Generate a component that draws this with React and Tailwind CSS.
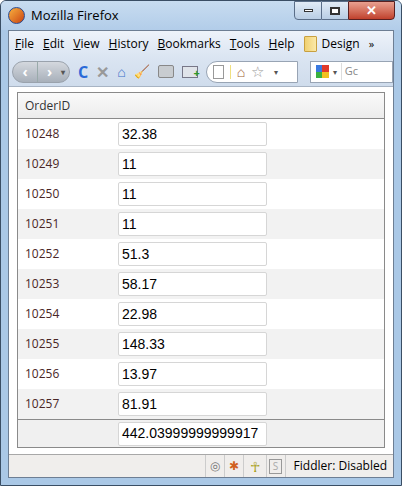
import React from "react";

const rows = [
  ["10248", "32.38"], ["10249", "11"], ["10250", "11"], ["10251", "11"], ["10252", "51.3"],
  ["10253", "58.17"], ["10254", "22.98"], ["10255", "148.33"], ["10256", "13.97"], ["10257", "81.91"],
];

const menu = ["File", "Edit", "View", "History", "Bookmarks", "Tools", "Help"];

function Input({ value }) {
  return (
    <div className="w-[149px] h-[24px] bg-white border border-[#d6d6d6] rounded-[2px] flex items-center pl-[3px] text-[14px] text-black" style={{ fontFamily: "'Liberation Sans', Arial, sans-serif" }}>
      {value}
    </div>
  );
}

export default function App() {
  return (
    <div className="w-[402px] h-[486px] bg-[#aac8e6] rounded-t-[6px] flex flex-col border border-[#3a4e64] overflow-hidden" style={{ fontFamily: "'Segoe UI', 'Open Sans', 'Liberation Sans', sans-serif" }}>
      {/* Title bar */}
      <div className="h-[29px] flex items-center bg-gradient-to-b from-[#c8dcf0] to-[#b2cde9] pl-[7px] relative">
        <div className="w-[17px] h-[17px] rounded-full bg-gradient-to-br from-[#f8b040] to-[#c84010] border border-[#2a4a90]" />
        <span className="ml-[6px] text-[13px] text-black">Mozilla Firefox</span>
        <div className="absolute right-[6px] top-0 flex">
          <div className="w-[28px] h-[19px] border border-[#5a6e88] rounded-bl-[4px] bg-gradient-to-b from-[#e2ecf6] to-[#b8cde4] flex items-center justify-center">
            <div className="w-[9px] h-[3px] bg-white border border-[#333]" />
          </div>
          <div className="w-[26px] h-[19px] border-y border-[#5a6e88] bg-gradient-to-b from-[#e2ecf6] to-[#b8cde4] flex items-center justify-center">
            <div className="w-[10px] h-[8px] border-2 border-[#333] bg-white" />
          </div>
          <div className="w-[47px] h-[19px] border border-[#5a2020] rounded-br-[4px] bg-gradient-to-b from-[#e8a090] to-[#c0402c] flex items-center justify-center text-white font-bold text-[13px]">
            ✕
          </div>
        </div>
      </div>
      {/* Browser body */}
      <div className="flex-1 mx-[7px] mb-[7px] border border-[#6d7e93] bg-[#dfe8f3] flex flex-col">
        <div className="h-[26px] flex items-center pl-[6px] gap-[9px] text-[12px] text-black bg-gradient-to-b from-[#eef3fa] to-[#dbe5f2] overflow-hidden whitespace-nowrap">
          {menu.map((m) => (
            <span key={m}><span className="underline">{m[0]}</span>{m.slice(1)}</span>
          ))}
          <span className="flex items-center gap-[5px]">
            <span className="w-[13px] h-[16px] bg-gradient-to-r from-[#f0d070] to-[#fbe9a8] border border-[#c8a040] rounded-[1px]" />
            Design
          </span>
          <span className="text-[11px]">»</span>
        </div>
        <div className="h-[29px] flex items-center pl-[3px] gap-[8px] bg-gradient-to-b from-[#dbe5f2] to-[#cfdcec]">
          <div className="flex h-[22px] w-[58px] rounded-full bg-gradient-to-b from-[#d4d8de] to-[#a8b0ba] border border-[#9aa2ac] items-center text-white text-[14px] font-bold">
            <span className="w-[24px] text-center">‹</span>
            <span className="w-[24px] text-center border-l border-[#9aa]">›</span>
            <span className="text-[8px] text-[#555]">▾</span>
          </div>
          <span className="text-[#2a6ad8] font-bold text-[16px]">C</span>
          <span className="text-[#999] font-bold text-[16px]">✕</span>
          <span className="text-[#3a70c8] text-[14px]">⌂</span>
          <span className="text-[#c89020] text-[13px]">🧹</span>
          <div className="w-[16px] h-[13px] bg-[#c8ccd0] border border-[#888] rounded-[2px]" />
          <div className="w-[16px] h-[12px] bg-[#e0e4ea] border border-[#778] relative">
            <span className="absolute -right-[3px] -bottom-[5px] text-[#2a9a2a] font-bold text-[11px]">+</span>
          </div>
          <div className="flex items-center h-[22px] w-[92px] bg-white border border-[#98a4b4] rounded-l-full pl-[6px] gap-[6px]">
            <div className="w-[11px] h-[14px] border border-[#999] bg-white" />
            <span className="w-px h-[14px] bg-[#f0e080]" />
            <span className="text-[#a06030] text-[14px]">⌂</span>
            <span className="text-[#999] text-[15px]">☆</span>
            <span className="text-[8px] text-[#555] ml-[4px]">▾</span>
          </div>
          <div className="flex items-center h-[22px] flex-1 bg-white border border-[#98a4b4] pl-[5px] gap-[4px] ml-[4px]">
            <div className="grid grid-cols-2 w-[13px] h-[13px]">
              <span className="bg-[#3a7ae0]" /><span className="bg-[#e03a2a]" /><span className="bg-[#3ab040]" /><span className="bg-[#f0c020]" />
            </div>
            <span className="text-[8px] text-[#555]">▾</span>
            <span className="text-[11px] text-[#888] border-l border-[#ddd] pl-[3px]">Gc</span>
          </div>
        </div>
        {/* Content */}
        <div className="flex-1 bg-white pt-[5px] px-[8px] border-t border-[#a8b4c4]">
          <div className="border border-[#8a8a8a] text-[12px]">
            <div className="h-[26px] flex items-center pl-[7px] bg-gradient-to-b from-[#fafafa] to-[#ececec] border-b border-[#8a8a8a] text-[#333]">
              OrderID
            </div>
            {rows.map(([id, v], i) => (
              <div key={id} className={`h-[30px] flex items-center ${i % 2 ? "bg-[#f2f2f2]" : "bg-white"}`}>
                <span className="w-[100px] pl-[7px] text-[#4a2626]">{id}</span>
                <Input value={v} />
              </div>
            ))}
            <div className="h-[28px] flex items-center bg-[#f0f0f0] border-t border-[#8a8a8a]">
              <span className="w-[100px]" />
              <Input value="442.03999999999917" />
            </div>
          </div>
        </div>
        {/* Status bar */}
        <div className="h-[23px] bg-[#f0eeec] border-t border-[#a8a8a8] flex items-center justify-end text-[12px] text-black">
          <span className="w-[19px] h-[22px] border-l border-[#ccc] flex items-center justify-center text-[#777]">◎</span>
          <span className="w-[19px] h-[22px] border-l border-[#ccc] flex items-center justify-center text-[#d06020]">✱</span>
          <span className="w-[23px] h-[22px] border-l border-[#ccc] flex items-center justify-center text-[#a8a020] text-[14px]">☥</span>
          <span className="w-[19px] h-[22px] border-l border-[#ccc] flex items-center justify-center">
            <span className="w-[13px] h-[15px] border border-[#999] text-[10px] text-[#aaa] flex items-center justify-center">S</span>
          </span>
          <span className="border-l border-[#ccc] h-[22px] flex items-center pl-[8px] pr-[6px]">Fiddler: Disabled</span>
        </div>
      </div>
    </div>
  );
}
